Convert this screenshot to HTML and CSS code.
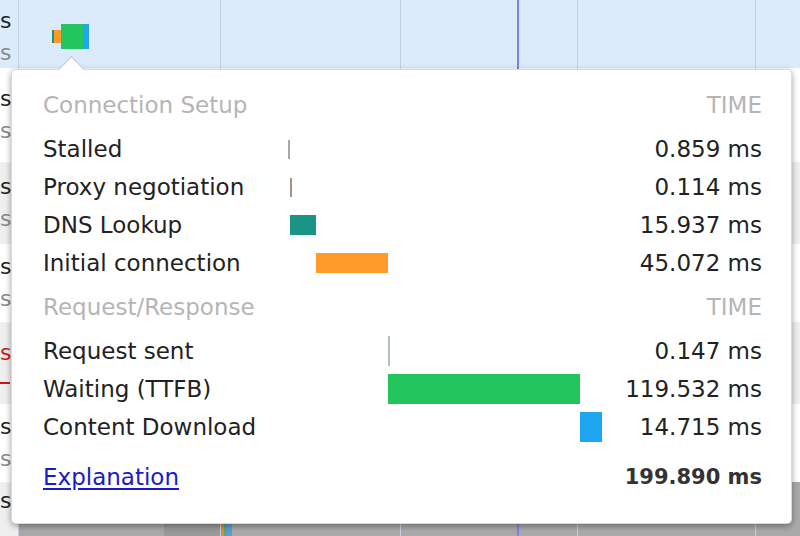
FILE: index.html
```html
<!DOCTYPE html>
<html>
<head>
<meta charset="utf-8">
<link rel="stylesheet" href="styles.css">
</head>
<body>
<div class="page">
  <div class="row row-sel">
    <div class="name name-sel"><span class="l1">s</span><span class="l2">s</span></div>
    <div class="wf">
      <div class="mini">
        <span class="m m-dns"></span><span class="m m-conn"></span><span class="m m-wait"></span><span class="m m-dl"></span>
      </div>
    </div>
  </div>
  <div class="row row-a"><div class="name"><span class="l1">s</span><span class="l2">s</span></div><div class="wf"></div></div>
  <div class="row row-b"><div class="name"><span class="l1">s</span><span class="l2">s</span></div><div class="wf"></div></div>
  <div class="row row-a"><div class="name"><span class="l1">s</span><span class="l2">s</span></div><div class="wf"></div></div>
  <div class="row row-b"><div class="name red"><span class="l1">s</span><span class="strike"></span></div><div class="wf"></div></div>
  <div class="row row-a"><div class="name"><span class="l1">s</span><span class="l2">s</span></div><div class="wf"></div></div>
  <div class="row row-b row-last"><div class="name"><span class="l1">s</span></div><div class="wf wf-last"><span class="lastbar"></span><span class="lastc"></span></div></div>

  <div class="grid-line" style="left:220px"></div>
  <div class="grid-line" style="left:400px"></div>
  <div class="grid-line dom" style="left:517px"></div>
  <div class="grid-line" style="left:577px"></div>
  <div class="grid-line" style="left:755px"></div>

  <div class="popup">
    <div class="section">
      <div class="hdr"><span>Connection Setup</span><span class="hdr-time">TIME</span></div>
      <div class="item"><span class="label">Stalled</span><span class="track"><span class="bar b-stall" style="margin-left:0px;width:2px"></span></span><span class="val">0.859 ms</span></div>
      <div class="item"><span class="label">Proxy negotiation</span><span class="track"><span class="bar b-proxy" style="margin-left:2px;width:2px"></span></span><span class="val">0.114 ms</span></div>
      <div class="item"><span class="label">DNS Lookup</span><span class="track"><span class="bar b-dns" style="margin-left:2px;width:26px"></span></span><span class="val">15.937 ms</span></div>
      <div class="item"><span class="label">Initial connection</span><span class="track"><span class="bar b-conn" style="margin-left:28px;width:72px"></span></span><span class="val">45.072 ms</span></div>
    </div>
    <div class="section section-2">
      <div class="hdr"><span>Request/Response</span><span class="hdr-time">TIME</span></div>
      <div class="item"><span class="label">Request sent</span><span class="track"><span class="bar b-send" style="margin-left:100px;width:2px"></span></span><span class="val">0.147 ms</span></div>
      <div class="item"><span class="label">Waiting (TTFB)</span><span class="track"><span class="bar b-wait" style="margin-left:100px;width:192px"></span></span><span class="val">119.532 ms</span></div>
      <div class="item"><span class="label">Content Download</span><span class="track"><span class="bar b-dl" style="margin-left:292px;width:22px"></span></span><span class="val">14.715 ms</span></div>
    </div>
    <div class="footer"><a href="#" class="explain">Explanation</a><span class="total">199.890 ms</span></div>
  </div>
</div>
</body>
</html>
```
FILE: styles.css
```css
html, body {
  margin: 0;
  padding: 0;
  width: 800px;
  height: 536px;
  overflow: hidden;
  background: #f2f2f2;
  font-family: "DejaVu Sans", sans-serif;
}

.page {
  position: relative;
  width: 800px;
  height: 536px;
  display: flex;
  flex-direction: column;
}

.row {
  display: flex;
  flex: none;
}
.row-sel { height: 68px; background: #dcebfc; }
.row-a { height: 94px; background: #ffffff; }
.row-b { height: 82px; background: #efefef; }
.row-a + .row-b + .row-a { height: 78px; }
.row-last { flex: 1; }

.name {
  width: 19px;
  flex: none;
  box-sizing: border-box;
  border-right: 1px solid #c9d2dc;
  display: flex;
  flex-direction: column;
  align-items: flex-start;
  justify-content: center;
  gap: 10px;
  font-size: 22px;
  line-height: 22px;
  font-weight: 500;
  white-space: nowrap;
  color: #222;
}
.name-sel { padding-top: 6px; }
.name .l2 { color: #8a8a8a; }
.name.red .l1 { color: #d0141c; }
.name .strike {
  display: block;
  width: 10px;
  height: 2px;
  background: #d0141c;
  margin-top: 8px;
}
.row-last .name { justify-content: flex-start; padding-top: 8px; }

.wf {
  flex: 1;
  display: flex;
  align-items: center;
}
.wf-last {
  background: #a9a9a9;
  align-items: flex-end;
}
.lastbar {
  width: 57px;
  height: 12px;
  margin-left: 145px;
  background: #999;
}
.lastc {
  width: 11px;
  height: 12px;
  background: linear-gradient(to right, #d09040 0 3px, #6aa070 3px 5px, #5aa0c8 5px);
}

.mini {
  display: flex;
  align-items: center;
  margin-left: 33px;
  margin-top: 4px;
}
.m { display: block; }
.m-dns { width: 2px; height: 13px; background: #1a9484; }
.m-conn { width: 7px; height: 13px; background: #fd9a2a; }
.m-wait { width: 22px; height: 25px; background: #22c55e; }
.m-dl { width: 6px; height: 25px; background: #1ea7f0; }

.grid-line {
  position: absolute;
  top: 0;
  bottom: 0;
  width: 1px;
  background: #c6d0dc;
}
.grid-line.dom {
  width: 2px;
  background: #7a80ef;
}

.popup {
  position: absolute;
  left: 11px;
  top: 69px;
  width: 781px;
  height: 455px;
  box-sizing: border-box;
  background: #ffffff;
  border: 1px solid rgba(0, 0, 0, 0.14);
  border-radius: 5px;
  box-shadow: 0 2px 6px rgba(0, 0, 0, 0.38);
  padding: 19px 29px 0 31px;
  color: #222;
  font-size: 23px;
  z-index: 2;
}
.popup::before {
  content: "";
  position: absolute;
  left: 50px;
  top: -10px;
  width: 18px;
  height: 18px;
  background: #fff;
  border-top: 1px solid #c4c4c4;
  border-left: 1px solid #c4c4c4;
  transform: rotate(45deg);
}

.section { display: flex; flex-direction: column; position: relative; }
.section-2 { margin-top: 9px; }

.hdr {
  height: 41px;
  padding-bottom: 9px;
  box-sizing: border-box;
  display: flex;
  justify-content: space-between;
  align-items: center;
  color: #b5b5b5;
}

.item {
  height: 38px;
  display: flex;
  align-items: center;
}
.label {
  width: 245px;
  flex: none;
  white-space: nowrap;
}
.track {
  flex: 1;
  display: flex;
  align-items: center;
}
.bar { display: block; flex: none; }
.b-stall { height: 19px; background: #a8a8a8; }
.b-proxy { height: 19px; background: #a99088; }
.b-dns { height: 20px; background: #1a9484; }
.b-conn { height: 20px; background: #fd9a2a; }
.b-send { height: 30px; background: #b0bec6; }
.b-wait { height: 30px; background: #22c55e; }
.b-dl { height: 30px; background: #1ea7f0; }
.val {
  flex: none;
  text-align: right;
  white-space: nowrap;
}

.footer {
  margin-top: 12px;
  height: 38px;
  display: flex;
  align-items: center;
  justify-content: space-between;
}
.explain {
  color: #1a1acc;
  text-decoration: underline;
  text-underline-offset: 3px;
}
.total {
  font-weight: bold;
  font-size: 21px;
  color: #333;
}
```
